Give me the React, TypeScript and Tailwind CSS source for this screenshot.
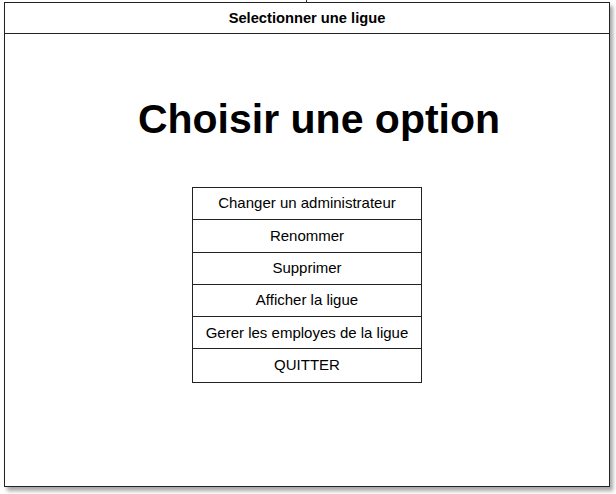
import React from "react";

const items = [
  "Changer un administrateur",
  "Renommer",
  "Supprimer",
  "Afficher la ligue",
  "Gerer les employes de la ligue",
  "QUITTER",
];

export default function App() {
  return (
    <div
      className="relative w-[616px] h-[494px] bg-white overflow-hidden"
      style={{ fontFamily: '"Liberation Sans", Arial, sans-serif' }}
    >
      <div className="absolute left-[306px] top-0 w-px h-[3px] bg-[#333]" />
      <div className="ml-[4px] mt-[2px] w-[606px] h-[485px] border border-[#222] bg-white flex flex-col shadow-[3px_4px_4px_rgba(0,0,0,0.35)]">
        <div className="h-[31px] border-b border-[#222] flex items-center justify-center text-[14.7px] font-bold text-black">
          Selectionner une ligue
        </div>
        <div className="flex flex-col items-center">
          <h1 className="mt-[62px] ml-[24px] text-[41px] leading-[46px] font-bold text-black">
            Choisir une option
          </h1>
          <div className="mt-[45px] w-[230px] border border-[#222] flex flex-col">
            {items.map((t, i) => (
              <div
                key={t}
                className={
                  "h-[32.3px] flex items-center justify-center text-[15px] text-black " +
                  (i < items.length - 1 ? "border-b border-[#222]" : "")
                }
              >
                {t}
              </div>
            ))}
          </div>
        </div>
      </div>
    </div>
  );
}
